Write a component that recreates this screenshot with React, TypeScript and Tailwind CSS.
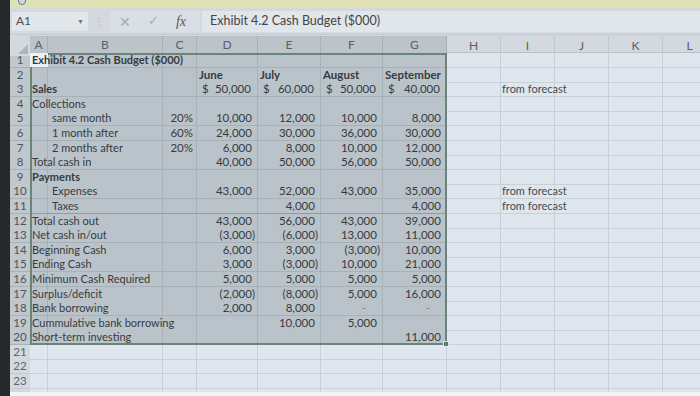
import React from "react";

type Row = {
  a?: string;
  b?: string;
  bold?: boolean;
  c?: string;
  vals?: string[];
  dollar?: boolean;
  heads?: boolean;
  i?: string;
};

const rows: Row[] = [
  { a: "Exhibit 4.2 Cash Budget ($000)", bold: true },
  { heads: true, vals: ["June", "July", "August", "September"] },
  { a: "Sales", bold: true, dollar: true, vals: ["50,000", "60,000", "50,000", "40,000"], i: "from forecast" },
  { a: "Collections" },
  { b: "same month", c: "20%", vals: ["10,000", "12,000", "10,000", "8,000"] },
  { b: "1 month after", c: "60%", vals: ["24,000", "30,000", "36,000", "30,000"] },
  { b: "2 months after", c: "20%", vals: ["6,000", "8,000", "10,000", "12,000"] },
  { a: "Total cash in", vals: ["40,000", "50,000", "56,000", "50,000"] },
  { a: "Payments", bold: true },
  { b: "Expenses", vals: ["43,000", "52,000", "43,000", "35,000"], i: "from forecast" },
  { b: "Taxes", vals: ["", "4,000", "", "4,000"], i: "from forecast" },
  { a: "Total cash out", vals: ["43,000", "56,000", "43,000", "39,000"] },
  { a: "Net cash in/out", vals: ["(3,000)", "(6,000)", "13,000", "11,000"] },
  { a: "Beginning Cash", vals: ["6,000", "3,000", "(3,000)", "10,000"] },
  { a: "Ending Cash", vals: ["3,000", "(3,000)", "10,000", "21,000"] },
  { a: "Minimum Cash Required", vals: ["5,000", "5,000", "5,000", "5,000"] },
  { a: "Surplus/deficit", vals: ["(2,000)", "(8,000)", "5,000", "16,000"] },
  { a: "Bank borrowing", vals: ["2,000", "8,000", "-", "-"] },
  { a: "Cummulative bank borrowing", vals: ["", "10,000", "5,000", ""] },
  { a: "Short-term investing", vals: ["", "", "", "11,000"] },
  {},
  {},
  {},
  {},
];

const cols = ["A", "B", "C", "D", "E", "F", "G", "H", "I", "J", "K", "L"];
const grid = "grid grid-cols-[20px_18px_115px_34px_61px_63px_62px_64px_54px_54px_54px_54px_54px]";

const Num = ({ v }: { v: string }) => {
  if (!v) return null;
  if (v === "-") return <span className="pr-[14px] text-[#7d858c]">-</span>;
  const neg = v.startsWith("(");
  return (
    <span>
      {v}
      {!neg && <span className="invisible">)</span>}
    </span>
  );
};

export default function App() {
  return (
    <div
      className="w-[700px] h-[396px] overflow-hidden flex bg-[#dfe6ee] text-[#363b40]"
      style={{ fontFamily: 'Lato, "Liberation Sans", Arial, sans-serif' }}
    >
      <div className="w-[10px] shrink-0 bg-[#26292c]" />
      <div className="flex-1 flex flex-col min-w-0 h-full">
        {/* top strip */}
        <div className="h-[8px] shrink-0 bg-[#dfe0b4] relative">
          <div className="absolute left-[8px] -top-[4px] w-[8px] h-[9px] rounded-b-full border border-[#5d7aa5] bg-[#cfd6e0]" />
        </div>
        {/* formula bar */}
        <div className="h-[27px] shrink-0 bg-[#d3d9df] flex items-center border-b border-[#c3cad1]">
          <div className="ml-[2px] w-[76px] h-[19px] bg-[#e2e7ec] flex items-center justify-between px-[4px] text-[12px] text-[#4a5056]">
            <span>A1</span>
            <span className="text-[7px] text-[#6e757b]">▼</span>
          </div>
          <div className="w-[22px] flex justify-center text-[10px] text-[#a0a8ae]">⋮</div>
          <div className="w-[90px] h-[21px] bg-[#d9dfe4] flex items-center text-[#a5adb3]">
            <span className="w-[30px] text-center text-[14px]">✕</span>
            <span className="w-[26px] text-center text-[13px]">✓</span>
            <span className="w-[30px] text-center text-[14px] italic text-[#555b60]" style={{ fontFamily: '"Liberation Serif", serif' }}>
              fx
            </span>
          </div>
          <div className="flex-1 h-[21px] ml-[2px] bg-[#e1e6eb] flex items-center pl-[8px] text-[12.5px] text-[#3f454a]">
            Exhibit 4.2 Cash Budget ($000)
          </div>
        </div>
        <div className="h-[1px] shrink-0 bg-[#d3d9df]" />
        {/* sheet */}
        <div className="relative flex-1 min-h-0 overflow-hidden">
          <div className={`${grid} h-[17px] bg-[#d3d9df] text-[12px] text-[#5a6066] border-b border-[#b9c1c8]`}>
            <div className="relative bg-[#d3d9df]">
              <div className="absolute right-[2px] bottom-[2px] w-0 h-0 border-l-[10px] border-l-transparent border-b-[10px] border-b-[#aeb6bd]" />
            </div>
            {cols.map((c, idx) => (
              <div
                key={c}
                className={
                  idx < 7
                    ? "flex items-center justify-center bg-[#bcc4ca] border-r border-[#a9b1b7] border-b-2 border-b-[#6d8a7c]"
                    : "flex items-center justify-center border-r border-[#c0c7ce]"
                }
              >
                {c}
              </div>
            ))}
          </div>
          {rows.map((r, ri) => {
            const n = ri + 1;
            const sel = n <= 20;
            const cell = sel
              ? "bg-[#bac3ca] border-r border-b border-[#a8b1b8]"
              : "border-r border-b border-[#c8d0d8]";
            const thick = n === 7 || n === 11 ? "border-b-[#8f9aa3]" : "";
            return (
              <div key={n} className={`${grid} h-[14.6px] text-[11px] leading-[14px]`}>
                <div
                  className={`text-center text-[11.5px] border-b ${
                    sel ? "bg-[#c0c8ce] border-[#aab2b9] text-[#4d5459]" : "bg-[#d3d9df] border-[#c3cad1] text-[#5f666c]"
                  }`}
                >
                  {n}
                </div>
                <div className={`${cell} ${thick} relative`}>
                  {r.a && (
                    <span className={`absolute left-[2px] top-0 whitespace-nowrap z-10 ${r.bold ? "font-bold" : ""}`}>
                      {r.a}
                    </span>
                  )}
                </div>
                <div className={`${cell} ${thick} pl-[4px] whitespace-nowrap`}>{r.b}</div>
                <div className={`${cell} ${thick} text-right pr-[3px] text-[11.5px]`}>{r.c}</div>
                {[0, 1, 2, 3].map((k) => (
                  <div
                    key={k}
                    className={`${cell} ${thick} whitespace-nowrap text-[11.5px] ${
                      r.heads ? "font-bold pl-[2px]" : r.dollar ? "flex justify-between pl-[5px] pr-[3px]" : "text-right pr-[2px]"
                    }`}
                  >
                    {r.heads && r.vals ? r.vals[k] : null}
                    {r.dollar && r.vals ? (
                      <>
                        <span>$</span>
                        <Num v={r.vals[k]} />
                      </>
                    ) : null}
                    {!r.heads && !r.dollar && r.vals ? <Num v={r.vals[k]} /> : null}
                  </div>
                ))}
                <div className="border-r border-b border-[#c8d0d8]" />
                <div className="border-r border-b border-[#c8d0d8] pl-[1px] whitespace-nowrap text-[#454b50]">{r.i}</div>
                <div className="border-r border-b border-[#c8d0d8]" />
                <div className="border-r border-b border-[#c8d0d8]" />
                <div className="border-r border-b border-[#c8d0d8]" />
              </div>
            );
          })}
          {/* selection outline */}
          <div className="absolute left-[20px] top-[17px] w-[417px] h-[292px] border-2 border-[#6a8478] pointer-events-none">
            <div className="absolute -right-[4px] -bottom-[4px] w-[6px] h-[6px] bg-[#5f7a6e] border border-[#dfe6ee]" />
          </div>
          <div className="absolute left-[20px] top-[17px] w-[18px] h-[14px] bg-[#eef1f3] z-0" />
        </div>
        <div className="h-[4px] shrink-0 bg-[#f1f3f4]" />
      </div>
    </div>
  );
}
